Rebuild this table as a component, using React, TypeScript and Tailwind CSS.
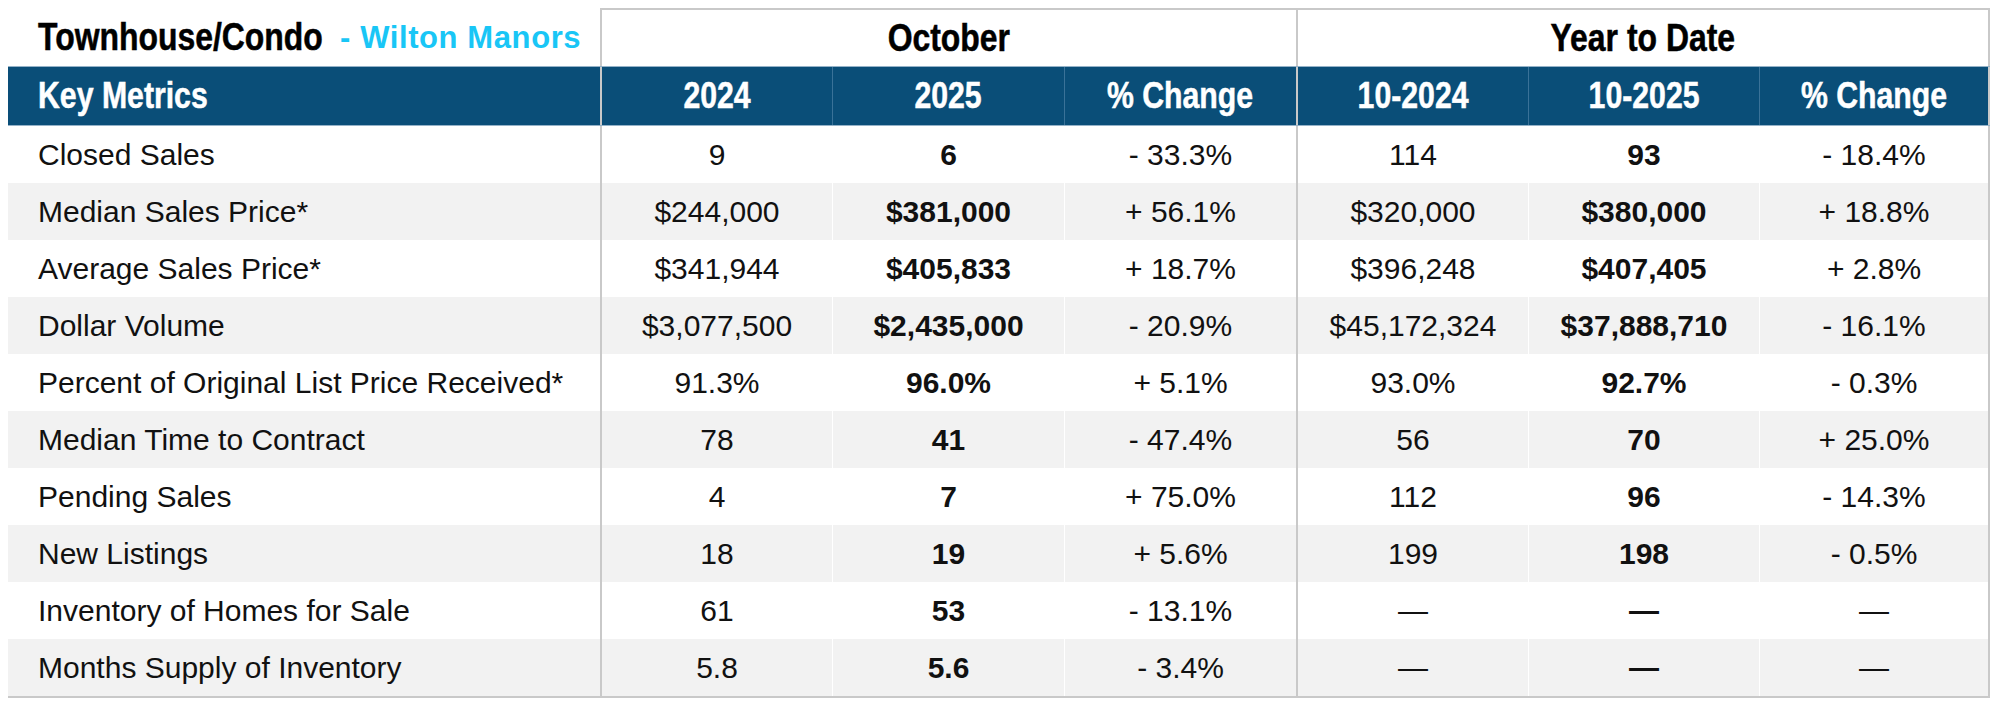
import React from 'react';

type Row = {
  label: string;
  vals: string[];
};

const rows: Row[] = [
  { label: 'Closed Sales', vals: ['9', '6', '- 33.3%', '114', '93', '- 18.4%'] },
  { label: 'Median Sales Price*', vals: ['$244,000', '$381,000', '+ 56.1%', '$320,000', '$380,000', '+ 18.8%'] },
  { label: 'Average Sales Price*', vals: ['$341,944', '$405,833', '+ 18.7%', '$396,248', '$407,405', '+ 2.8%'] },
  { label: 'Dollar Volume', vals: ['$3,077,500', '$2,435,000', '- 20.9%', '$45,172,324', '$37,888,710', '- 16.1%'] },
  { label: 'Percent of Original List Price Received*', vals: ['91.3%', '96.0%', '+ 5.1%', '93.0%', '92.7%', '- 0.3%'] },
  { label: 'Median Time to Contract', vals: ['78', '41', '- 47.4%', '56', '70', '+ 25.0%'] },
  { label: 'Pending Sales', vals: ['4', '7', '+ 75.0%', '112', '96', '- 14.3%'] },
  { label: 'New Listings', vals: ['18', '19', '+ 5.6%', '199', '198', '- 0.5%'] },
  { label: 'Inventory of Homes for Sale', vals: ['61', '53', '- 13.1%', '—', '—', '—'] },
  { label: 'Months Supply of Inventory', vals: ['5.8', '5.6', '- 3.4%', '—', '—', '—'] },
];

const headers = ['2024', '2025', '% Change', '10-2024', '10-2025', '% Change'];

// column edges for the body rows (index 0 = first value column)
const bodyCol = [
  'border-l-2 border-l-[#c9c9c9]',
  'border-l border-l-white',
  'border-l border-l-white',
  'border-l-2 border-l-[#c9c9c9]',
  'border-l border-l-white',
  'border-l border-l-white border-r-2 border-r-[#c9c9c9]',
];

const headCol = [
  'border-l-2 border-l-[#c9c9c9]',
  'border-l border-l-[#3a7298]',
  'border-l border-l-[#3a7298]',
  'border-l-2 border-l-[#c9c9c9]',
  'border-l border-l-[#3a7298]',
  'border-l border-l-[#3a7298] border-r-2 border-r-[#c9c9c9]',
];

const grid = 'grid grid-cols-[592px_232px_232px_232px_232px_231px_231px]';

// fake a condensed bold face: squeeze horizontally, thicken the strokes a bit
function Condensed({ children, left }: { children: React.ReactNode; left?: boolean }) {
  return (
    <span
      className={`inline-block whitespace-nowrap scale-x-[0.84] [-webkit-text-stroke:0.5px] ${
        left ? 'origin-left' : 'origin-center'
      }`}
    >
      {children}
    </span>
  );
}

export default function App() {
  return (
    <div className="min-h-[705px] w-[1998px] bg-white pl-[8px] pt-[8px] font-['Liberation_Sans',Arial,sans-serif] text-[#111]">
      <div className="w-[1982px]">
        {/* title row */}
        <div className={`${grid} h-[58px]`}>
          <div className="flex items-center pl-[30px]">
            <span className="inline-block w-[290px] text-[38px] font-bold leading-none text-black">
              <Condensed left>Townhouse/Condo</Condensed>
            </span>
            <span className="ml-[12px] text-[31px] font-bold leading-none tracking-[0.6px] text-[#19c6f6]">
              - Wilton Manors
            </span>
          </div>
          <div className="col-span-3 flex items-center justify-center border-l-2 border-t-2 border-[#c9c9c9] text-[38px] font-bold leading-none text-black">
            <Condensed>October</Condensed>
          </div>
          <div className="col-span-3 flex items-center justify-center border-l-2 border-r-2 border-t-2 border-[#c9c9c9] text-[38px] font-bold leading-none text-black">
            <Condensed>Year to Date</Condensed>
          </div>
        </div>

        {/* blue header */}
        <div className={`${grid} h-[60px] border-y border-y-[#94b2c8] bg-[#0a4e78] text-[36px] font-bold leading-none text-white`}>
          <div className="flex items-center pl-[30px]">
            <Condensed left>Key Metrics</Condensed>
          </div>
          {headers.map((h, i) => (
            <div key={i} className={`flex items-center justify-center ${headCol[i]}`}>
              <Condensed>{h}</Condensed>
            </div>
          ))}
        </div>

        {/* data rows */}
        <div className="border-b-2 border-b-[#c9c9c9]">
          {rows.map((r, ri) => (
            <div
              key={r.label}
              className={`${grid} h-[57px] text-[30px] leading-none ${ri % 2 === 1 ? 'bg-[#f2f2f2]' : 'bg-white'}`}
            >
              <div className="flex items-center whitespace-nowrap pl-[30px]">{r.label}</div>
              {r.vals.map((v, i) => (
                <div
                  key={i}
                  className={`flex items-center justify-center whitespace-nowrap ${bodyCol[i]} ${
                    i === 1 || i === 4 ? 'font-bold' : ''
                  }`}
                >
                  {v}
                </div>
              ))}
            </div>
          ))}
        </div>
      </div>
    </div>
  );
}
